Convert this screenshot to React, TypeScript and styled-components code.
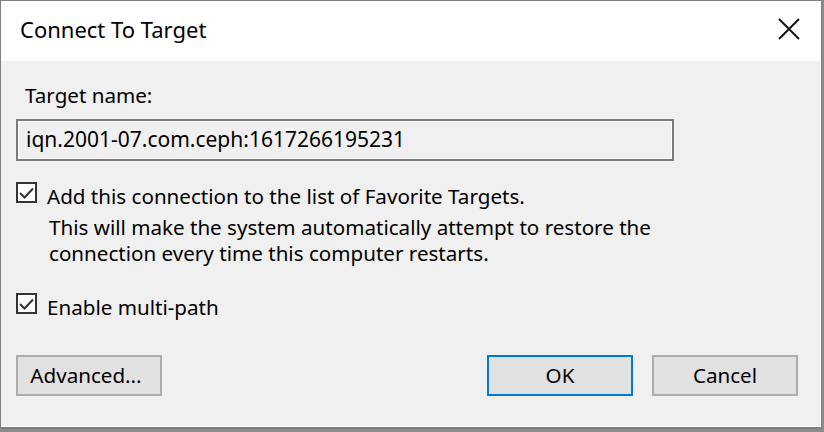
import React from 'react';
import styled, { createGlobalStyle } from 'styled-components';

const GlobalStyle = createGlobalStyle`
  html, body {
    margin: 0;
    padding: 0;
    background: #8c8c8c;
  }
  body {
    font-family: "Noto Sans", "Open Sans", sans-serif;
    color: #000;
  }
`;

const Window = styled.div`
  width: 820px;
  height: 426px;
  border: 1px solid #7f7f7f;
  border-bottom-width: 2px;
  box-sizing: content-box;
  background: #f0f0f0;
  display: flex;
  flex-direction: column;
`;

const TitleBar = styled.header`
  height: 60px;
  background: #fff;
  display: flex;
  align-items: center;
  justify-content: space-between;
  padding: 0 0 4px 19px;
  box-sizing: border-box;
`;

const Title = styled.h1`
  margin: 0;
  font-size: 22px;
  font-weight: 400;
`;

const CloseButton = styled.button`
  width: 58px;
  height: 56px;
  border: 0;
  background: transparent;
  display: flex;
  align-items: center;
  justify-content: center;
  margin-right: 3px;
  padding: 0;
`;

const Body = styled.main`
  flex: 1;
  display: flex;
  flex-direction: column;
  padding: 20px 22px 0 15px;
  border-right: 1px solid #fff;
  border-bottom: 1px solid #fff;
`;

const Label = styled.div`
  font-size: 20.6px;
  padding-left: 9px;
  line-height: 28px;
`;

const TextField = styled.div`
  margin-top: 10px;
  width: 658px;
  height: 42px;
  box-sizing: border-box;
  border: 2px solid #7a7a7a;
  box-shadow: inset 0 0 0 1px #fff;
  display: flex;
  align-items: center;
  padding: 0 8px 2px;
  font-size: 21px;
  background: #f0f0f0;
`;

const CheckRow = styled.label<{ $gap: number }>`
  margin-top: ${(p) => p.$gap}px;
  display: flex;
  align-items: flex-start;
  gap: 10px;
`;

const Box = styled.span`
  width: 21px;
  height: 21px;
  box-sizing: border-box;
  border: 2px solid #333;
  background: #fff;
  display: flex;
  align-items: center;
  justify-content: center;
  flex-shrink: 0;
  margin-top: -1px;
`;

const CheckText = styled.div`
  font-size: 20.6px;
  line-height: 26px;
`;

const Hint = styled.div`
  padding-left: 2px;
  margin-top: 5px;
`;

const Buttons = styled.footer`
  margin-top: 35px;
  display: flex;
  align-items: center;
`;

const Button = styled.button<{ $primary?: boolean }>`
  width: 146px;
  height: 41px;
  box-sizing: border-box;
  font-family: inherit;
  font-size: 20.6px;
  color: #000;
  background: #e1e1e1;
  border: 2px solid ${(p) => (p.$primary ? '#0078d7' : '#adadad')};
  padding: 0 0 2px;
  &:first-child {
    margin-right: auto;
    padding-right: 6px;
  }
  & + & {
    margin-left: 19px;
  }
`;

const Check = () => (
  <Box>
    <svg width="15" height="12" viewBox="0 0 15 12">
      <path d="M1 6 L5.5 10.5 L14 1.5" fill="none" stroke="#333" strokeWidth="2" />
    </svg>
  </Box>
);

export default function App() {
  return (
    <>
      <GlobalStyle />
      <Window>
        <TitleBar>
          <Title>Connect To Target</Title>
          <CloseButton aria-label="Close">
            <svg width="22" height="22" viewBox="0 0 22 22">
              <path d="M1 1 L21 21 M21 1 L1 21" stroke="#111" strokeWidth="2" />
            </svg>
          </CloseButton>
        </TitleBar>
        <Body>
          <Label>Target name:</Label>
          <TextField>iqn.2001-07.com.ceph:1617266195231</TextField>
          <CheckRow $gap={22}>
            <Check />
            <CheckText>
              Add this connection to the list of Favorite Targets.
              <Hint>
                This will make the system automatically attempt to restore the
                <br />
                connection every time this computer restarts.
              </Hint>
            </CheckText>
          </CheckRow>
          <CheckRow $gap={28}>
            <Check />
            <CheckText>Enable multi-path</CheckText>
          </CheckRow>
          <Buttons>
            <Button>Advanced...</Button>
            <Button $primary>OK</Button>
            <Button>Cancel</Button>
          </Buttons>
        </Body>
      </Window>
    </>
  );
}
